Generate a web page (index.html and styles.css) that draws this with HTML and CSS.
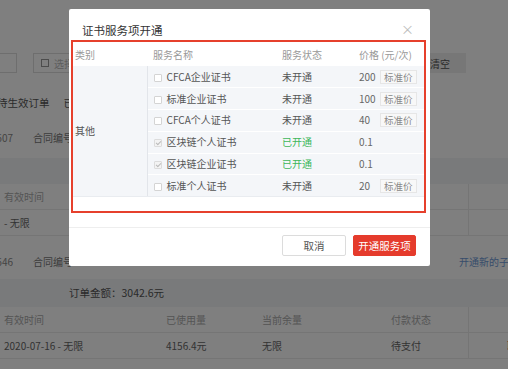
FILE: index.html
```html
<!DOCTYPE html>
<html lang="zh-CN">
<head>
    <meta charset="UTF-8">
    <title>证书服务项开通</title>
    <link rel="stylesheet" href="styles.css">
</head>
<body>
    <!-- page behind the dialog -->
    <div class="page">
        <div class="filters">
            <div class="inp"></div>
            <div class="sel"><span class="sel-ico"></span>选择日期</div>
            <div class="clear-btn">清空</div>
        </div>

        <div class="tabs">
            <span class="tab first">待生效订单</span>
            <span class="tab">已生效订单</span>
        </div>

        <div class="meta">
            <span class="cut">20200716000607</span>
            <span class="contract">合同编号</span>
        </div>

        <div class="band"></div>

        <div class="grid">
            <div class="cell head">有效时间</div>
            <div class="cell head"></div>
            <div class="cell head"></div>
            <div class="cell head"></div>
            <div class="cell head last"></div>
            <div class="cell">- 无限</div>
            <div class="cell"></div>
            <div class="cell"></div>
            <div class="cell"></div>
            <div class="cell last"></div>
        </div>

        <div class="meta meta-2">
            <span class="cut">20200716000646</span>
            <span class="contract">合同编号</span>
            <span class="new-link">开通新的子账户</span>
        </div>

        <div class="band band-2">订单金额：3042.6元</div>

        <div class="grid grid-2">
            <div class="cell head">有效时间</div>
            <div class="cell head">已使用量</div>
            <div class="cell head">当前余量</div>
            <div class="cell head">付款状态</div>
            <div class="cell head last"></div>
            <div class="cell">2020-07-16 - 无限</div>
            <div class="cell">4156.4元</div>
            <div class="cell">无限</div>
            <div class="cell">待支付</div>
            <div class="cell last"><span class="danger">取消</span></div>
        </div>

        <div class="mask"></div>

        <!-- dialog -->
        <div class="modal">
            <div class="modal-head">
                <span class="modal-title">证书服务项开通</span>
                <span class="modal-close">×</span>
            </div>

            <div class="mark">
                <table class="svc">
                    <colgroup>
                        <col style="width:74px">
                        <col style="width:129px">
                        <col style="width:77px">
                        <col style="width:71px">
                    </colgroup>
                    <thead>
                        <tr>
                            <th class="c-cat">类别</th>
                            <th>服务名称</th>
                            <th>服务状态</th>
                            <th>价格 (元/次)</th>
                        </tr>
                    </thead>
                    <tbody>
                        <tr>
                            <td class="cat" rowspan="6">其他</td>
                            <td><span class="cb"></span>CFCA企业证书</td>
                            <td>未开通</td>
                            <td><span class="num">200</span><span class="tag">标准价</span></td>
                        </tr>
                        <tr>
                            <td><span class="cb"></span>标准企业证书</td>
                            <td>未开通</td>
                            <td><span class="num">100</span><span class="tag">标准价</span></td>
                        </tr>
                        <tr>
                            <td><span class="cb"></span>CFCA个人证书</td>
                            <td>未开通</td>
                            <td><span class="num">40</span><span class="tag">标准价</span></td>
                        </tr>
                        <tr>
                            <td><span class="cb on"></span>区块链个人证书</td>
                            <td class="ok">已开通</td>
                            <td><span class="num">0.1</span></td>
                        </tr>
                        <tr>
                            <td><span class="cb on"></span>区块链企业证书</td>
                            <td class="ok">已开通</td>
                            <td><span class="num">0.1</span></td>
                        </tr>
                        <tr class="end">
                            <td><span class="cb"></span>标准个人证书</td>
                            <td>未开通</td>
                            <td><span class="num">20</span><span class="tag">标准价</span></td>
                        </tr>
                    </tbody>
                </table>
            </div>

            <div class="modal-foot">
                <button class="btn">取消</button>
                <button class="btn primary">开通服务项</button>
            </div>
        </div>
    </div>
</body>
</html>
```

FILE: styles.css
```css
* {
    box-sizing: border-box;
}

body {
    margin: 0;
    font-family: "Noto Sans CJK SC", "Noto Sans", sans-serif;
    font-size: 10px;
    color: #666;
    overflow: hidden;
}

.page {
    position: relative;
    width: 508px;
    height: 369px;
    overflow: hidden;
    background: #fff;
    padding-top: 53px;
}

/* background page */
.filters {
    display: flex;
    height: 20px;
    align-items: stretch;
}

.inp {
    width: 27px;
    margin-left: -10px;
    border: 1px solid #ddd;
}

.sel {
    display: flex;
    align-items: center;
    width: 120px;
    margin-left: 16px;
    padding-left: 7px;
    border: 1px solid #ddd;
    color: #bbb;
    white-space: nowrap;
}

.sel-ico {
    width: 8px;
    height: 8px;
    border: 1px solid #999;
    margin-right: 5px;
}

.clear-btn {
    margin-left: auto;
    margin-right: 42px;
    width: 60px;
    background: #eee;
    color: #555;
    display: flex;
    align-items: center;
    justify-content: center;
    padding-left: 8px;
}

.tabs {
    display: flex;
    margin-top: 23px;
    height: 14px;
    line-height: 14px;
    font-size: 10.5px;
    color: #555;
    white-space: nowrap;
}

.tab.first {
    margin-left: -3px;
    margin-right: 14px;
}

.meta {
    display: flex;
    margin-top: 21px;
    height: 14px;
    line-height: 14px;
    color: #777;
    white-space: nowrap;
}

.cut {
    width: 13px;
    overflow: hidden;
    direction: rtl;
    color: #888;
}

.contract {
    margin-left: 20px;
}

.band {
    margin-top: 13px;
    height: 26px;
    background: #f2f4f6;
}

.grid {
    display: grid;
    grid-template-columns: 162px 96px 129px 81px 1fr;
}

.cell {
    height: 26px;
    padding-left: 4px;
    line-height: 25px;
    border-bottom: 1px solid #ebebeb;
    color: #666;
    white-space: nowrap;
    overflow: hidden;
}

.cell.head {
    color: #aaa;
}

.cell.last {
    border-left: 1px solid #ebebeb;
    padding-left: 38px;
}

.meta-2 {
    margin-top: 19px;
    margin-bottom: 1px;
}

.new-link {
    margin-left: auto;
    margin-right: -40px;
    width: 89px;
    color: #6f9ad6;
}

.band-2 {
    margin-top: 10px;
    height: 28px;
    line-height: 28px;
    padding-left: 69px;
    color: #555;
    font-size: 10.5px;
}

.danger {
    color: #e53b2c;
}

.mask {
    position: absolute;
    inset: 0;
    background: rgba(0, 0, 0, 0.5);
}

/* dialog */
.modal {
    position: absolute;
    left: 69px;
    top: 9px;
    width: 361px;
    height: 257px;
    background: #fff;
    border-radius: 2px;
}

.modal-head {
    display: flex;
    justify-content: space-between;
    height: 31px;
    padding: 14px 16px 0 13px;
    line-height: 14px;
}

.modal-title {
    font-size: 11.5px;
    color: #333;
}

.modal-close {
    font-size: 13px;
    color: #bbb;
    line-height: 12px;
}

.mark {
    margin: 0 4px 0 2px;
    border: 2px solid #e6402c;
    padding-bottom: 14px;
}

.svc {
    width: 351px;
    table-layout: fixed;
    border-collapse: collapse;
}

.svc th {
    height: 24px;
    padding: 0 0 0 6px;
    text-align: left;
    font-weight: normal;
    color: #999;
    background: #fff;
}

.svc th.c-cat {
    padding-left: 2px;
}

.svc td {
    height: 21.8px;
    padding: 0 0 0 6px;
    background: #f4f6f9;
    border-bottom: 1px solid #fff;
    color: #555;
    white-space: nowrap;
    line-height: 12px;
}

.svc tr.end td,
.svc td.cat {
    border-bottom: 1px solid #e9ecf0;
}

.svc td.cat {
    padding-left: 2px;
    border-right: 1px solid #e2e5ea;
}

.svc td.ok {
    color: #3db65a;
}

.cb {
    display: inline-block;
    position: relative;
    width: 8px;
    height: 8px;
    margin-right: 5px;
    border: 1px solid #d4d4d4;
    border-radius: 1px;
    background: #fff;
    vertical-align: -1px;
}

.cb.on {
    background: #f3f3f3;
    border-color: #dcdcdc;
}

.cb.on::after {
    content: "";
    position: absolute;
    left: 2px;
    top: 0;
    width: 2px;
    height: 4px;
    border: solid #bbb;
    border-width: 0 1px 1px 0;
    transform: rotate(45deg);
}

.num {
    display: inline-block;
    width: 21px;
    color: #666;
}

.tag {
    display: inline-block;
    padding: 0 3px;
    border: 1px solid #e6e6e6;
    background: #f8f8f8;
    color: #888;
    font-size: 9.5px;
    line-height: 12px;
}

.modal-foot {
    display: flex;
    justify-content: flex-end;
    gap: 7px;
    margin-top: 14px;
    padding: 7px 14px 0;
    border-top: 1px solid #eee;
}

.btn {
    width: 64px;
    height: 21px;
    padding: 0;
    border: 1px solid #dcdcdc;
    border-radius: 2px;
    background: #fff;
    color: #555;
    font-family: inherit;
    font-size: 10.5px;
}

.btn.primary {
    width: 63px;
    background: #e53b2c;
    border-color: #e53b2c;
    color: #fff;
}
```
